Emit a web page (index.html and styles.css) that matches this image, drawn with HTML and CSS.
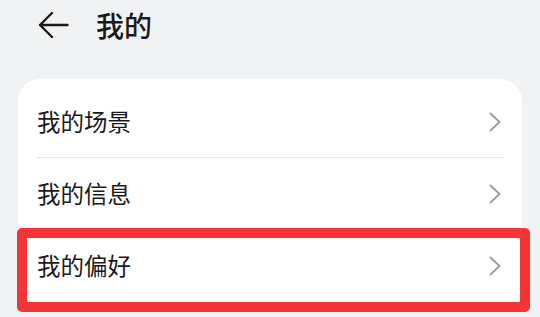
FILE: index.html
```html
<!DOCTYPE html>
<html lang="zh-CN">
<head>
<meta charset="utf-8">
<link rel="stylesheet" href="styles.css">
</head>
<body>
<div class="page">
  <header class="header">
    <svg class="back" width="31" height="28" viewBox="0 0 31 28">
      <path d="M29.5 14 H2 M14 2 L2 14 L14 26" fill="none" stroke="#1a1a1a" stroke-width="2.4" stroke-linecap="round" stroke-linejoin="round"/>
    </svg>
    <h1 class="title">我的</h1>
  </header>
  <div class="card">
    <div class="row"><span class="label">我的场景</span><svg class="chev" width="12" height="20" viewBox="0 0 12 20"><path d="M1.5 1.5 L10.5 10 L1.5 18.5" fill="none" stroke="#9a9a9a" stroke-width="1.8" stroke-linecap="round" stroke-linejoin="round"/></svg></div>
    <div class="divider"></div>
    <div class="row"><span class="label">我的信息</span><svg class="chev" width="12" height="20" viewBox="0 0 12 20"><path d="M1.5 1.5 L10.5 10 L1.5 18.5" fill="none" stroke="#9a9a9a" stroke-width="1.8" stroke-linecap="round" stroke-linejoin="round"/></svg></div>
    <div class="row"><span class="label">我的偏好</span><svg class="chev" width="12" height="20" viewBox="0 0 12 20"><path d="M1.5 1.5 L10.5 10 L1.5 18.5" fill="none" stroke="#9a9a9a" stroke-width="1.8" stroke-linecap="round" stroke-linejoin="round"/></svg></div>
  </div>
  <div class="highlight"></div>
</div>
</body>
</html>
```
FILE: styles.css
```css
html, body {
  margin: 0;
  padding: 0;
  background: #f1f2f4;
}
.page {
  position: relative;
  width: 540px;
  height: 317px;
  overflow: hidden;
  font-family: "Noto Sans CJK SC", "Noto Sans", sans-serif;
  color: #1a1a1a;
}
.header {
  display: flex;
  align-items: center;
  height: 50px;
  padding-left: 38px;
}
.back {
  display: block;
}
.title {
  margin: 0 0 0 27px;
  font-size: 28px;
  font-weight: 500;
  line-height: 1;
}
.card {
  margin: 29px 0 0 18px;
  width: 504px;
  background: #ffffff;
  border-radius: 22px;
  padding: 7px 0 8px;
}
.row {
  display: flex;
  align-items: center;
  justify-content: space-between;
  height: 72px;
  padding: 0 21px 0 19px;
}
.label {
  font-size: 23.5px;
  font-weight: 400;
  line-height: 1;
}
.chev {
  display: block;
}
.divider {
  height: 1px;
  background: #e3e3e3;
  margin: -1px 18px 0 18px;
}
.highlight {
  position: absolute;
  left: 17px;
  top: 228px;
  width: 513px;
  height: 84px;
  box-sizing: border-box;
  border: 10px solid #f53438;
  border-radius: 5px;
}
```
